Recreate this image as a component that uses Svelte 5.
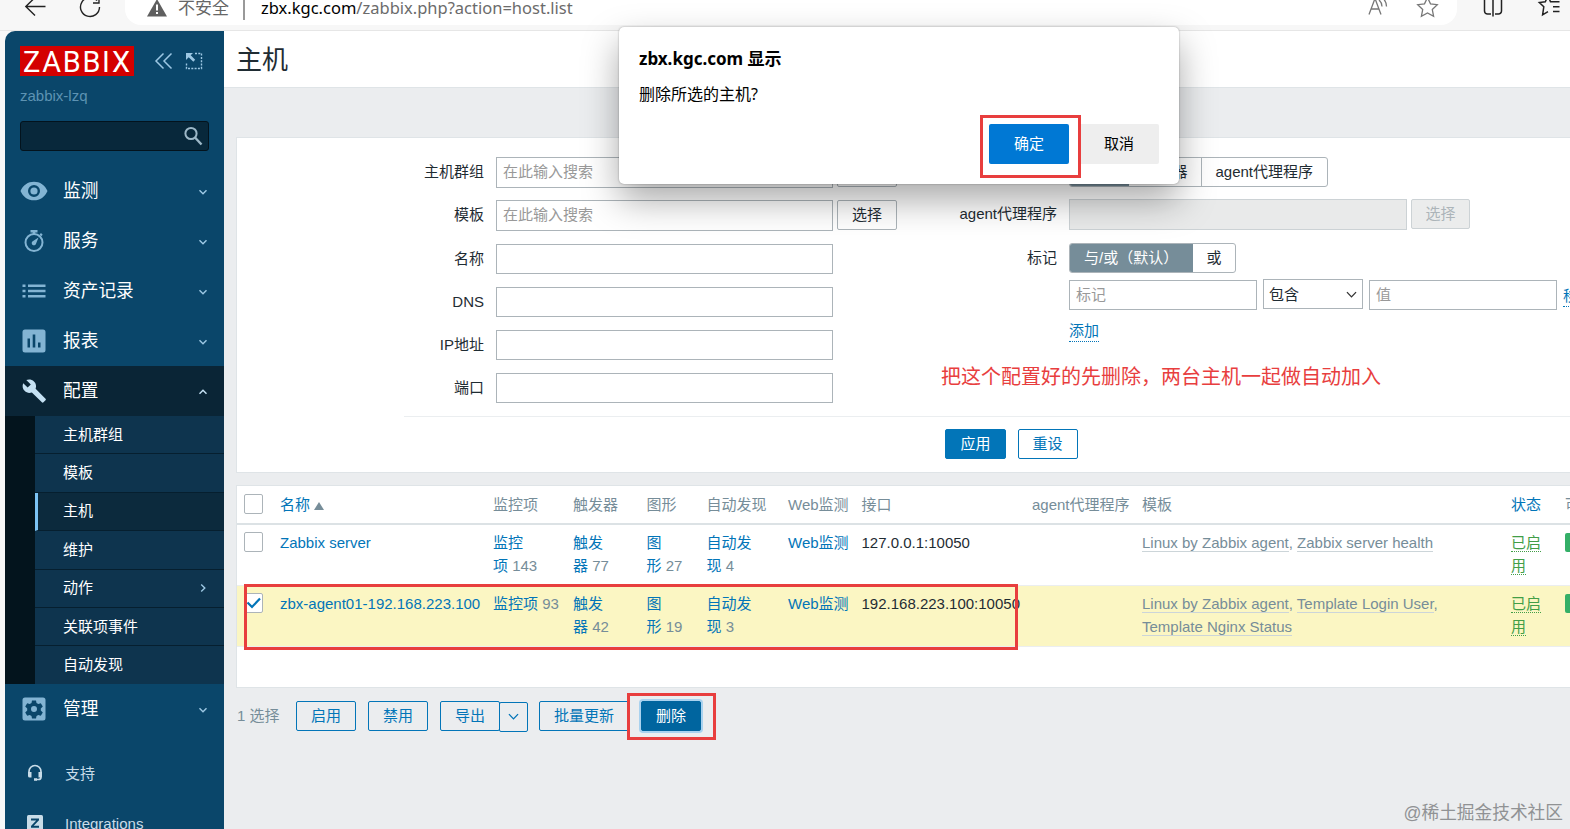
<script>
    //* main menu
    const menuTop = [
        {icon: 'eye', label: '监测'},
        {icon: 'timer', label: '服务'},
        {icon: 'list', label: '资产记录'},
        {icon: 'chart', label: '报表'},
        {icon: 'wrench', label: '配置', open: true},
    ];

    const subMenu = [
        {label: '主机群组'},
        {label: '模板'},
        {label: '主机', active: true},
        {label: '维护'},
        {label: '动作', more: true},
        {label: '关联项事件'},
        {label: '自动发现'},
    ];

    //* host list
    const hosts = [
        {
            name: 'Zabbix server',
            counts: [['监控', '项', 143], ['触发', '器', 77], ['图', '形', 27], ['自动发', '现', 4]],
            iface: '127.0.0.1:10050',
            templates: ['Linux by Zabbix agent', 'Zabbix server health'],
        },
        {
            name: 'zbx-agent01-192.168.223.100',
            selected: true,
            counts: [['监控项', '', 93], ['触发', '器', 42], ['图', '形', 19], ['自动发', '现', 3]],
            iface: '192.168.223.100:10050',
            templates: ['Linux by Zabbix agent', 'Template Login User', 'Template Nginx Status'],
        },
    ];
</script>

{#snippet menuIcon(name)}
    <svg class="menu-icon" viewBox="0 0 28 28" width="28" height="28">
        {#if name === 'eye'}
            <path fill-rule="evenodd" d="M.5 14C3 8 8 4.700 14 4.700S25 8 27.500 14C25 20 20 23.300 14 23.300S3 20 .5 14zM14 8a6 6 0 1 0 0 12a6 6 0 0 0 0-12z"/>
            <circle cx="14" cy="14" r="3.600"/>
        {:else if name === 'timer'}
            <circle cx="14" cy="15.500" r="8.500" fill="none" stroke="currentColor" stroke-width="2"/>
            <path d="M10.500 3h7v2.500h-2.200v2h-2.600v-2h-2.200zM19.500 7.500l1.500-1.500 1.700 1.700-1.500 1.500zM18.500 10.500l-2.500 6.300a2.200 2.200 0 1 1-3.300-2.500z"/>
        {:else if name === 'list'}
            <path d="M2.500 7.500h3V10h-3zM8 7.500h17.500V10H8zM2.500 12.700h3v2.500h-3zM8 12.700h17.500v2.500H8zM2.500 18h3v2.500h-3zM8 18h17.500v2.500H8z"/>
        {:else if name === 'chart'}
            <path fill-rule="evenodd" d="M5 2.500h18a2.500 2.500 0 0 1 2.500 2.500v18a2.500 2.500 0 0 1-2.500 2.500H5A2.500 2.500 0 0 1 2.500 23V5A2.500 2.500 0 0 1 5 2.500zM7.500 11.500v9H10v-9zM12.700 7.500v13h2.600v-13zM18 15.500v5h2.500v-5z"/>
        {:else if name === 'wrench'}
            <path d="M25 21.500L14.700 11.200c1-2.600.5-5.600-1.700-7.600C10.800 1.500 7.500 1 5 2.200l4.700 4.500-3.300 3.300L1.800 5.500C.6 8 1.100 11.300 3.200 13.400c2.100 2.100 5 2.600 7.600 1.600L21.200 25.300c.5.5 1.200.5 1.700 0l2.100-2.200c.5-.4.5-1.200 0-1.600z" transform="translate(1.500 1) scale(.96)"/>
        {:else if name === 'gear'}
            <path fill-rule="evenodd" d="M5 2.500h18a2.500 2.500 0 0 1 2.500 2.500v18a2.500 2.500 0 0 1-2.500 2.500H5A2.500 2.500 0 0 1 2.500 23V5A2.500 2.500 0 0 1 5 2.500zM12 5.500l-.5 2.600-1.800 1-2.500-.9-2 3.400 2 1.800v2.200l-2 1.800 2 3.400 2.500-.9 1.800 1 .5 2.600h4l.5-2.600 1.800-1 2.500.9 2-3.400-2-1.800v-2.200l2-1.800-2-3.400-2.500.9-1.800-1-.5-2.600zM14 11a3 3 0 1 1 0 6a3 3 0 0 1 0-6z"/>
        {/if}
    </svg>
{/snippet}

{#snippet chevron(dir)}
    <svg class="chevron {dir}" viewBox="0 0 10 10" width="10" height="10">
        <path d="M1.500 3.200L5 6.800l3.500-3.600" fill="none" stroke="currentColor" stroke-width="1.400"/>
    </svg>
{/snippet}

<div class="window">
    <div class="browser-bar">
        <svg class="nav-icons" viewBox="0 0 125 30" width="125" height="30">
            <path d="M25.500 6.500h20M35-2.500l-9.200 9L35 15.500" fill="none" stroke="#222" stroke-width="1.400"/>
            <path d="M99.500 7A9.500 9.500 0 1 1 97 .6M99-4v7h-6" fill="none" stroke="#222" stroke-width="1.400"/>
        </svg>
        <div class="address">
            <svg viewBox="0 0 20 18" width="20" height="18">
                <path d="M10 0L20 17.500H0z" fill="#5f5f5f"/>
                <path d="M9 5.500h2v6H9zM9 13h2v2H9z" fill="#fff"/>
            </svg>
            <span class="insecure">不安全</span>
            <span class="bar"></span>
            <span class="url"><b>zbx.kgc.com</b>/zabbix.php?action=host.list</span>
            <svg class="address-icons" viewBox="0 0 72 24" width="72" height="24">
                <g fill="none" stroke="#777" stroke-width="1.300">
                    <path d="M1 18.500L7 2.500l6 16M3.200 13h7.600M11 4q3 2.500 3 6.500M14 1.500q4.500 3.500 4.500 9"/>
                    <path d="M59.500 1.500l3 6.300 6.800.9-5 4.800 1.300 6.800-6.100-3.300-6.100 3.300 1.300-6.800-5-4.800 6.800-.9z"/>
                </g>
            </svg>
        </div>
        <svg class="tool-icons" viewBox="0 0 113 30" width="113" height="30">
            <g fill="none" stroke="#222" stroke-width="1.500">
                <path d="M34-3h-3.500a3 3 0 0 0-3 3v11a3 3 0 0 0 3 3H34M38-3h3.500a3 3 0 0 1 3 3v11a3 3 0 0 1-3 3H38M36-4v20.500"/>
                <path d="M96 1.700h-2.500L91-4l-2.700 5.700-6 .8 4.500 4.300-1.200 8 5.400-3.200M96 1.700h6.500M96 6.700h6.500M96 11.500h6.500"/>
            </g>
        </svg>
    </div>

    <div class="page">
        <aside class="sidebar">
            <div class="brand">
                <svg class="logo" viewBox="0 0 114 30" width="114" height="30">
                    <rect width="114" height="30" fill="#d40000"/>
                    <text x="3" y="25.500" textLength="107" fill="#fff" font-family="Roboto, sans-serif" font-size="28.800">ZABBIX</text>
                </svg>
                <svg class="collapse" viewBox="0 0 20 18" width="20" height="18">
                    <path d="M9.500 1.500L2 9l7.500 7.500M17.500 1.500L10 9l7.500 7.500" fill="none" stroke="currentColor" stroke-width="1.500"/>
                </svg>
                <svg class="kiosk" viewBox="0 0 18 18" width="18" height="18">
                    <path d="M10 1.500h6.500v15h-15V10" fill="none" stroke="currentColor" stroke-width="1.400" stroke-dasharray="2 1.300"/>
                    <path d="M1 1h7L5.700 3.300l4.500 4.500-1.900 1.900-4.600-4.500L1 8z" fill="currentColor"/>
                </svg>
            </div>
            <div class="server-name">zabbix-lzq</div>
            <div class="search">
                <svg viewBox="0 0 20 20" width="20" height="20">
                    <circle cx="8" cy="7.500" r="5.600" fill="none" stroke="currentColor" stroke-width="2"/>
                    <path d="M12 11.500l6.500 7" stroke="currentColor" stroke-width="2.400"/>
                </svg>
            </div>

            <nav>
                {#each menuTop as item}
                    <div class="menu-item" class:open={item.open}>
                        {@render menuIcon(item.icon)}
                        <span>{item.label}</span>
                        {@render chevron(item.open ? 'up' : 'down')}
                    </div>
                {/each}
                <div class="submenu">
                    {#each subMenu as item}
                        <div class="sub-item" class:active={item.active}>
                            <span>{item.label}</span>
                            {#if item.more}{@render chevron('right')}{/if}
                        </div>
                    {/each}
                </div>
                <div class="menu-item">
                    {@render menuIcon('gear')}
                    <span>管理</span>
                    {@render chevron('down')}
                </div>
            </nav>

            <div class="footer-menu">
                <div class="footer-item">
                    <svg viewBox="0 0 16 18" width="16" height="18">
                        <path d="M2 9V7.500a6 6 0 0 1 12 0V13q0 2.500-2.500 2.500H9" fill="none" stroke="currentColor" stroke-width="1.700"/>
                        <path d="M1 8h3.500v5.500H2.800Q1 13.500 1 12zM15 8h-3.500v5.500h1.700Q15 13.500 15 12zM7 14.300h3v2.500H7z" fill="currentColor"/>
                    </svg>
                    <span>支持</span>
                </div>
                <div class="footer-item">
                    <svg viewBox="0 0 16 16" width="16" height="16">
                        <rect width="16" height="16" rx="1.500" fill="currentColor"/>
                        <path d="M4 3.500h8v1.800L6.700 10.800H12v2H4V11l5.200-5.500H4z" fill="#0a466a"/>
                    </svg>
                    <span>Integrations</span>
                </div>
            </div>
        </aside>

        <main>
            <header><h1>主机</h1></header>

            <section class="filter">
                <div class="filter-cols">
                    <div class="filter-left">
                        <label for="groups">主机群组</label>
                        <input id="groups" class="tall" placeholder="在此输入搜索">
                        <button class="grey">选择</button>
                        <label for="templates">模板</label>
                        <input id="templates" class="tall" placeholder="在此输入搜索">
                        <button class="grey">选择</button>
                        <label for="name">名称</label>
                        <input id="name"><i></i>
                        <label for="dns">DNS</label>
                        <input id="dns"><i></i>
                        <label for="ip">IP地址</label>
                        <input id="ip"><i></i>
                        <label for="port">端口</label>
                        <input id="port"><i></i>
                    </div>

                    <div class="filter-right">
                        <div class="line first">
                            <span class="name">由...监测</span>
                            <div class="toggle"><b>任何</b><span class="server">服务器</span><span>agent代理程序</span></div>
                        </div>
                        <div class="line second">
                            <span class="name">agent代理程序</span>
                            <input class="tall proxy" disabled>
                            <button class="grey" disabled>选择</button>
                        </div>
                        <div class="line third">
                            <span class="name">标记</span>
                            <div class="toggle"><b class="and-or">与/或（默认）</b><span>或</span></div>
                        </div>
                        <div class="line tags">
                            <input placeholder="标记">
                            <div class="select"><span>包含</span>{@render chevron('down')}</div>
                            <input placeholder="值">
                            <span class="dotted remove">移除</span>
                        </div>
                        <div class="add"><span class="dotted">添加</span></div>
                    </div>
                </div>
                <div class="filter-buttons">
                    <button class="primary">应用</button>
                    <button>重设</button>
                </div>
            </section>

            <section class="hosts">
                <div class="row head">
                    <div><span class="check"></span></div>
                    <div class="link">名称<span class="sort"></span></div>
                    <div>监控项</div>
                    <div>触发器</div>
                    <div>图形</div>
                    <div>自动发现</div>
                    <div>Web监测</div>
                    <div>接口</div>
                    <div>agent代理程序</div>
                    <div>模板</div>
                    <div class="link">状态</div>
                    <div>可用性</div>
                </div>
                {#each hosts as host}
                    <div class="row" class:selected={host.selected}>
                        <div>
                            <span class="check">
                                {#if host.selected}
                                    <svg viewBox="0 0 18 18" width="18" height="18">
                                        <path d="M2.500 8.500l4.500 4.500 8-8.500" fill="none" stroke="#0275b8" stroke-width="2.200"/>
                                    </svg>
                                {/if}
                            </span>
                        </div>
                        <div class="link">{host.name}</div>
                        {#each host.counts as [first, second, count]}
                            <div><span class="link">{first}{#if second}<br>{second}{/if}</span> {count}</div>
                        {/each}
                        <div class="link">Web监测</div>
                        <div class="iface">{host.iface}</div>
                        <div></div>
                        <div class="templates">
                            {#each host.templates as template, i}{#if i}{', '}{/if}<span>{template}</span>{/each}
                        </div>
                        <div class="status"><span>已启</span><br><span>用</span></div>
                        <div><span class="zbx">ZBX</span></div>
                    </div>
                {/each}
            </section>

            <div class="actions">
                <span class="count">1 选择</span>
                <button>启用</button>
                <button>禁用</button>
                <div class="split">
                    <button>导出</button>
                    <button class="drop">{@render chevron('down')}</button>
                </div>
                <button class="mass">批量更新</button>
                <button class="delete">删除</button>
            </div>
        </main>
    </div>

    <div class="dialog">
        <h2>zbx.kgc.com 显示</h2>
        <p>删除所选的主机?</p>
        <div class="dialog-buttons">
            <span class="ok">确定</span>
            <span class="cancel">取消</span>
        </div>
    </div>

    <!-- marks over the page -->
    <div class="mark mark-ok"></div>
    <div class="mark mark-host"></div>
    <div class="mark mark-delete"></div>
    <div class="note">把这个配置好的先删除，两台主机一起做自动加入</div>
    <div class="watermark">@稀土掘金技术社区</div>
</div>

<style>
    :global(body) {
        overflow: hidden;
    }

    .window {
        position: relative;
        width: 1570px;
        height: 829px;
        overflow: hidden;
        background: #f7f7f7;
        color: #1f2c33;
        font: 15px/23px "Liberation Sans", "Noto Sans CJK SC", sans-serif;
    }

    .window * {
        box-sizing: border-box;
    }

    /* browser */
    .browser-bar {
        display: flex;
        height: 31px;
        border-bottom: 1px solid #e6e6e6;
    }

    .address {
        display: flex;
        width: 1332px;
        height: 25px;
        padding: 0 17px 10px 22px;
        align-items: center;
        background: #fff;
        border-radius: 0 0 16px 16px;
        font-family: "Noto Sans", "Noto Sans CJK SC", sans-serif;
        font-size: 17px;
        line-height: 20px;
    }

    .address svg {
        flex: none;
    }

    .insecure {
        margin-left: 11px;
        color: #666;
    }

    .bar {
        width: 2px;
        height: 24px;
        margin: 0 16px 0 14px;
        background: #999;
    }

    .url {
        width: 313px;
        color: #6b6b6b;
        font-size: 16.500px;
        white-space: nowrap;
    }

    .url b {
        color: #000;
        font-weight: 400;
    }

    .address .address-icons {
        margin-left: auto;
    }

    /* sidebar */
    .page {
        display: flex;
        height: 798px;
        padding-left: 5px;
    }

    .sidebar {
        flex: none;
        width: 219px;
        overflow: hidden;
        background: #0a466a;
        border-top-left-radius: 10px;
        color: #fff;
    }

    .brand {
        display: flex;
        height: 45px;
        padding: 15px 0 0 15px;
        align-items: center;
        color: #9cc7e3;
    }

    .collapse {
        margin-left: 20px;
    }

    .kiosk {
        margin-left: 11px;
    }

    .server-name {
        padding: 8px 15px 0;
        color: #5d93b3;
    }

    .search {
        display: flex;
        height: 30px;
        margin: 14px 15px 15px;
        padding-right: 5px;
        align-items: center;
        justify-content: flex-end;
        background: #08283b;
        border: 1px solid #03131d;
        border-radius: 3px;
        color: #9db8c8;
    }

    .menu-item {
        display: flex;
        height: 50px;
        padding: 0 16px 1px 15px;
        align-items: center;
        font-size: 17.700px;
    }

    .menu-item span {
        flex: 1;
        margin: 1px 0 0 15px;
    }

    .menu-icon {
        color: #83b4d3;
        fill: currentColor;
    }

    .chevron {
        margin-top: 3px;
        color: #9cc7e3;
    }

    .chevron.up {
        transform: rotate(180deg);
    }

    .chevron.right {
        margin-top: 0;
        transform: rotate(-90deg);
    }

    .menu-item.open {
        background: #0a2536;
    }

    .open .menu-icon,
    .open .chevron {
        color: #c5e1f3;
    }

    .submenu {
        height: 268px;
        padding-left: 30px;
        background: #03141d;
    }

    .sub-item {
        display: flex;
        height: 38.400px;
        padding: 0 16px 1px 28px;
        align-items: center;
        justify-content: space-between;
        background: #0e344e;
        border-bottom: 1px solid #061f2f;
    }

    .sub-item:last-child {
        height: 37.600px;
        border: 0;
    }

    .sub-item.active {
        padding-left: 25px;
        background: #0c2a3d;
        border-left: 3px solid #7cc4f5;
    }

    .footer-menu {
        margin-top: 14px;
        color: #c8dce8;
    }

    .footer-item {
        display: flex;
        height: 50px;
        padding-left: 22px;
        align-items: center;
        gap: 22px;
    }

    /* content */
    main {
        flex: none;
        width: 1400px;
        background: #ebedef;
    }

    header {
        height: 57px;
        padding: 11px 12px;
        background: #fff;
        border-bottom: 1px solid #dfe4e7;
    }

    h1 {
        margin: 0;
        font-size: 26px;
        font-weight: 400;
        line-height: 37px;
    }

    .filter,
    .hosts {
        margin: 49px 0 13px 12px;
        background: #fff;
        border: 1px solid #dfe4e7;
    }

    .filter {
        height: 336px;
        margin-bottom: 12px;
        padding-top: 19px;
    }

    .filter-cols {
        display: flex;
        height: 259px;
    }

    .filter-left {
        display: grid;
        grid-template-columns: 247px 337px 60px;
        grid-template-rows: 43px 44px;
        grid-auto-rows: 43px;
        column-gap: 4px;
        align-items: start;
    }

    .filter-left label {
        line-height: 29px;
        text-align: right;
    }

    .filter-left input {
        width: 337px;
    }

    .filter-left label + input {
        margin-left: 8px;
    }

    .filter-left button {
        margin-left: 8px;
    }

    input {
        height: 30px;
        padding: 0 6px 1px;
        background: #fff;
        border: 1px solid #acb4b9;
        border-radius: 0;
        color: #1f2c33;
        font: inherit;
    }

    input.tall {
        height: 31px;
        padding-bottom: 2px;
    }

    input::placeholder {
        color: #999;
    }

    input:disabled {
        background: #e9eaea;
        border-color: #ccd2d5;
    }

    .filter-right {
        margin-left: 23px;
    }

    .line {
        display: flex;
        align-items: flex-start;
    }

    .line .name {
        width: 145px;
        margin-right: 12px;
        line-height: 29px;
        text-align: right;
    }

    .first {
        height: 42px;
    }

    .second {
        height: 44px;
        gap: 4px;
    }

    .second .name {
        margin-right: 8px;
    }

    .second button {
        min-width: 59px;
        padding: 0 13px;
    }

    .third {
        height: 37px;
    }

    .proxy {
        width: 338px;
    }

    .toggle {
        display: flex;
        height: 30px;
        border: 1px solid #acb4b9;
        border-radius: 3px;
        line-height: 28px;
        overflow: hidden;
    }

    .toggle > * {
        padding: 0 13.500px;
        font-weight: 400;
    }

    .toggle span + span {
        border-left: 1px solid #acb4b9;
    }

    .toggle b {
        width: 59px;
        background: #768d99;
        color: #fff;
    }

    .toggle .server {
        width: 72px;
    }

    .toggle b.and-or {
        width: 123px;
        padding: 0 14px;
        white-space: nowrap;
    }

    .tags {
        gap: 6px;
        padding-left: 157px;
    }

    .tags input {
        width: 188px;
        padding-bottom: 2px;
    }

    .select {
        display: flex;
        width: 100px;
        height: 30px;
        margin-top: -1px;
        padding: 0 4px 0 5px;
        align-items: center;
        justify-content: space-between;
        border: 1px solid #acb4b9;
    }

    .select .chevron {
        width: 13px;
        height: 13px;
        margin: 0;
        color: #333;
    }

    .select .chevron path,
    .drop .chevron path {
        stroke-width: 1;
    }

    .dotted {
        border-bottom: 1px dotted #0275b8;
        color: #0275b8;
    }

    .remove {
        height: 24px;
        margin-top: 3px;
        line-height: 25px;
        white-space: nowrap;
    }

    .add {
        padding: 11px 0 0 157px;
        line-height: 20px;
    }

    .add .dotted {
        display: inline-block;
    }

    button {
        min-width: 60px;
        height: 30px;
        padding: 0 14px;
        background: transparent;
        border: 1px solid #0275b8;
        border-radius: 2px;
        color: #0275b8;
        font: inherit;
        line-height: 28px;
        white-space: nowrap;
    }

    button.grey {
        border-color: #acb4b9;
        color: #1f2c33;
    }

    button:disabled {
        background: #ebecec;
        border-color: #ccd2d5;
        color: #acb4b9;
    }

    button.primary {
        background: #0275b8;
        color: #fff;
    }

    .filter-buttons {
        display: flex;
        width: 1215px;
        margin-left: 167px;
        padding-top: 12px;
        justify-content: center;
        gap: 12px;
        border-top: 1px solid #ebeef0;
    }

    /* host table */
    .hosts {
        height: 203px;
        margin: 0 0 0 12px;
    }

    .row {
        display: grid;
        grid-template-columns: 43px 213px 80px 73.500px 60px 81.500px 73.500px 170.500px 110px 369px 54px 120px;
        height: 61px;
        padding: 6px 0;
        border-bottom: 1px solid #ebeef0;
        color: #768d99;
        white-space: nowrap;
    }

    .row.head {
        height: 39px;
        padding-top: 7px;
        border-bottom: 2px solid #dce2e5;
    }

    .row.selected {
        background: #fbf6c3;
    }

    .link {
        color: #0275b8;
    }

    .check {
        display: block;
        width: 19px;
        height: 20px;
        margin: 1px 0 0 7px;
        background: #fff;
        border: 1px solid #acb4b9;
        border-radius: 2px;
    }

    .check svg {
        display: block;
    }

    .sort {
        display: inline-block;
        margin-left: 4px;
        border: 5px solid transparent;
        border-top: 0;
        border-bottom: 8px solid #768d99;
    }

    .iface {
        color: #1f2c33;
    }

    .templates {
        width: 300px;
        white-space: normal;
    }

    .templates span {
        border-bottom: 1px solid #ccd5d9;
    }

    .status span {
        border-bottom: 1px dotted #429e47;
        color: #429e47;
    }

    .zbx {
        display: block;
        width: 40px;
        height: 19px;
        margin-top: 2px;
        padding-left: 7px;
        background: #34af67;
        border-radius: 2px;
        color: #fff;
        line-height: 19px;
    }

    .actions {
        display: flex;
        padding: 13px 0 0 13px;
        align-items: flex-start;
    }

    .count {
        width: 59px;
        color: #768d99;
        line-height: 29px;
    }

    .actions > button,
    .split {
        margin-right: 12px;
    }

    .split {
        display: flex;
        width: 87px;
    }

    .split .drop {
        min-width: 29px;
        margin: 1px 0 0 -1px;
        padding: 0;
    }

    .drop .chevron {
        width: 13px;
        height: 13px;
        margin: -3px 0 0;
        color: #0275b8;
        vertical-align: middle;
    }

    .actions button.delete {
        background: #00659f;
        border-color: #00659f;
        box-shadow: 0 0 0 2px #a9d2ef;
        color: #fff;
    }

    /* browser dialog */
    .dialog {
        position: absolute;
        top: 27px;
        left: 619px;
        width: 560px;
        height: 157px;
        padding: 20px 20px;
        background: #fff;
        border-radius: 5px;
        box-shadow: 0 0 2px rgba(0, 0, 0, .35), 0 16px 36px rgba(0, 0, 0, .34);
        color: #000;
        font-family: "Noto Sans", "Noto Sans CJK SC", sans-serif;
    }

    .dialog h2 {
        margin: 0;
        font-size: 17px;
        line-height: 24px;
    }

    .dialog p {
        margin: 11px 0 18px;
        font-size: 16px;
        line-height: 24px;
    }

    .dialog-buttons {
        display: flex;
        justify-content: flex-end;
        gap: 10px;
    }

    .dialog-buttons span {
        width: 80px;
        height: 40px;
        border-radius: 2px;
        line-height: 39px;
        text-align: center;
    }

    .dialog-buttons .ok {
        background: #0078d4;
        color: #fff;
    }

    .dialog-buttons .cancel {
        background: #eee;
    }

    /* marks */
    .mark {
        position: absolute;
        border: 3px solid #e83e3e;
    }

    .mark-ok {
        top: 115px;
        left: 980px;
        width: 101px;
        height: 63px;
    }

    .mark-host {
        top: 584px;
        left: 244px;
        width: 774px;
        height: 66px;
    }

    .mark-delete {
        top: 693px;
        left: 627px;
        width: 89px;
        height: 47px;
    }

    .note {
        position: absolute;
        top: 362px;
        left: 941px;
        color: #e83e3e;
        font-size: 20px;
        line-height: 30px;
        white-space: nowrap;
    }

    .watermark {
        position: absolute;
        right: 7px;
        bottom: 4px;
        color: #909294;
        font-size: 17.700px;
    }
</style>
